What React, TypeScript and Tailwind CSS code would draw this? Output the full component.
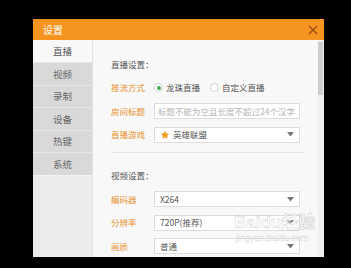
import React from 'react'

const FONT = { fontFamily: '"Noto Sans CJK SC", "Noto Sans", sans-serif' }

const navItems = ["直播", "视频", "录制", "设备", "热键", "系统"]

const Arrow = () => (
  <svg width="7" height="5" viewBox="0 0 7 5" className="shrink-0">
    <path d="M0 0 L7 0 L3.5 4.5 Z" fill="#777" />
  </svg>
)

const Star = () => (
  <svg width="10" height="10" viewBox="0 0 24 24" className="shrink-0">
    <path d="M12 1.5 L15.1 8.2 L22.4 8.9 L16.9 13.8 L18.5 21 L12 17.3 L5.5 21 L7.1 13.8 L1.6 8.9 L8.9 8.2 Z" fill="#f39a1e" />
  </svg>
)

const Select = ({ children }: { children: React.ReactNode }) => (
  <div className="w-[146px] h-[16px] bg-white border border-[#dcdcdc] flex items-center pl-[5px] pr-[5px] gap-[3px] text-[#555]">
    <div className="flex-1 flex items-center gap-[3px]">{children}</div>
    <Arrow />
  </div>
)

const Row = ({ label, children }: { label: string, children: React.ReactNode }) => (
  <div className="h-[16px] flex items-center">
    <span className="w-[43px] text-[#e8912f]">{label}</span>
    {children}
  </div>
)

const Radio = ({ checked, label }: { checked?: boolean, label: string }) => (
  <div className="flex items-center gap-[3px] mr-[10px]">
    <span className="w-[9px] h-[9px] rounded-full bg-white border border-[#d0d0d0] flex items-center justify-center">
      {checked && <span className="w-[4px] h-[4px] rounded-full bg-[#3fae49]" />}
    </span>
    <span className="text-[#555]">{label}</span>
  </div>
)

const App = () => {
  return (
    <div className="w-[351px] h-[268px] bg-black pt-[19px] pl-[33px] overflow-hidden relative" style={FONT}>
      <div className="w-[291px] h-[238px] flex flex-col bg-[#f8f8f8]">
        <div className="h-[21px] bg-[#f5951f] flex items-center justify-between pl-[10px] pr-[6px]">
          <span className="text-white text-[10px]">设置</span>
          <svg width="10" height="10" viewBox="0 0 10 10">
            <path d="M1 1 L9 9 M9 1 L1 9" stroke="#9a4a12" strokeWidth="1.2" />
          </svg>
        </div>
        <div className="flex-1 flex min-h-0">
          <div className="w-[60px] flex flex-col bg-[#ededed] border-r border-[#e2e2e2]">
            {navItems.map((item, i) => (
              <div
                key={item}
                className={
                  i === 0
                    ? "h-[22px] flex items-center justify-center text-[9.5px] text-[#555] bg-[#f8f8f8]"
                    : "h-[22.6px] flex items-center justify-center text-[9.5px] text-[#666] bg-[#d9d9d9] border-t border-[#e8e8e8]"
                }
              >
                {item}
              </div>
            ))}
            <div className="flex-1 bg-[#ececec] border-t border-[#f4f4f4]" />
          </div>
          <div className="flex-1 flex flex-col pl-[18px] pt-[16px] gap-[7.5px] text-[8.5px] text-[#555] overflow-hidden whitespace-nowrap">
            <div className="h-[16px] flex items-center">直播设置：</div>
            <Row label="推流方式">
              <Radio checked label="龙珠直播" />
              <Radio label="自定义直播" />
            </Row>
            <Row label="房间标题">
              <div className="w-[146px] h-[16px] bg-white border border-[#dcdcdc] flex items-center pl-[3px] text-[#b5b5b5] overflow-hidden">
                标题不能为空且长度不超过24个汉字
              </div>
            </Row>
            <Row label="直播游戏">
              <Select>
                <Star />
                <span>英雄联盟</span>
              </Select>
            </Row>
            <div className="w-[192px] h-px bg-[#e3e3e3] mt-[2px]" />
            <div className="h-[16px] flex items-center mt-[7px]">视频设置：</div>
            <Row label="编码器">
              <Select><span>X264</span></Select>
            </Row>
            <Row label="分辨率">
              <Select><span>720P(推荐)</span></Select>
            </Row>
            <Row label="画质">
              <Select><span>普通</span></Select>
            </Row>
          </div>
          <div className="w-[6px] bg-[#f0f0f0] pt-[2px]">
            <div className="w-[5px] h-[53px] bg-[#cfcfcf]" />
          </div>
        </div>
      </div>
      <div className="absolute left-[234px] top-[213px] flex flex-col items-start pointer-events-none whitespace-nowrap">
        <span className="text-[17px] leading-[20px] text-white/70 font-bold [-webkit-text-stroke:0.5px_rgba(140,140,140,0.45)]" style={{ fontFamily: '"Liberation Sans", "Noto Sans CJK SC", sans-serif' }}>Baidu经验</span>
        <span className="text-[9px] leading-[11px] text-white/60 ml-[2px] [-webkit-text-stroke:0.3px_rgba(140,140,140,0.4)]" style={{ fontFamily: '"Liberation Sans", sans-serif' }}>jingyan.baidu.com</span>
      </div>
    </div>
  )
}

export default App
